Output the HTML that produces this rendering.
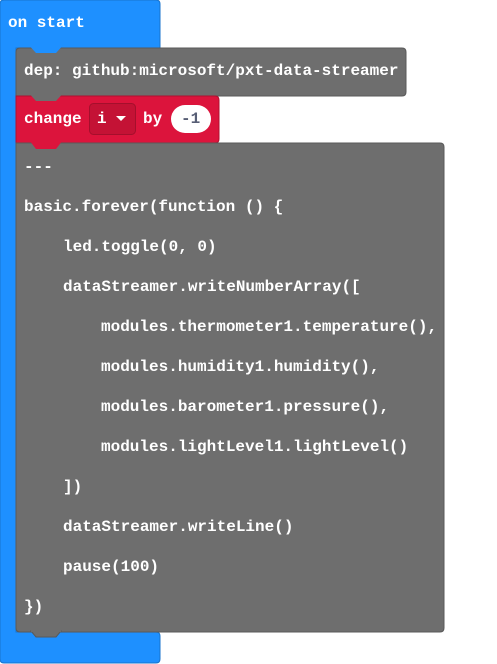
<!DOCTYPE html>
<html><head><meta charset="utf-8"><style>
html,body{margin:0;padding:0;background:#fff;width:497px;height:664px;overflow:hidden}
text{font-family:"Liberation Mono",monospace;font-weight:bold;font-size:16px;fill:#fff}
</style></head><body>
<svg width="497" height="664" xmlns="http://www.w3.org/2000/svg">
<path d="M4,0 H156 Q160,0 160,4 V48 H16 V632 H156 Q160,632 160,636 V659 Q160,663 156,663 H4 Q0,663 0,659 V4 Q0,0 4,0 Z" fill="#1e90ff" stroke="#1873cc" stroke-width="1"/>
<path d="M20,48 H402 Q406,48 406,52 V92 Q406,96 402,96 H16 V52 Q16,48 20,48 Z" fill="#6e6e6e" stroke="#595959" stroke-width="1"/>
<polygon points="31,47.5 36,53 56,53 61,47.5" fill="#1e90ff"/>
<path d="M16,96 H215 Q219,96 219,100 V139 Q219,143 215,143 H16 Z" fill="#dc143c" stroke="#b0102f" stroke-width="1"/>
<polygon points="31,95.5 36,101 56,101 61,95.5" fill="#6e6e6e"/>
<rect x="89.5" y="103.5" width="46" height="31" rx="4" fill="#c41235" stroke="#a50f2c"/>
<polygon points="116,116 126,116 121,121" fill="#fff"/>
<rect x="171" y="105" width="40" height="28" rx="14" fill="#fff"/>
<text x="24" y="123">change</text>
<text x="97" y="123">i</text>
<text x="143" y="123">by</text>
<text x="181" y="123" style="fill:#575e75">-1</text>
<path d="M16,143 H440 Q444,143 444,147 V628 Q444,632 440,632 H20 Q16,632 16,628 Z" fill="#6e6e6e" stroke="#595959" stroke-width="1"/>
<polygon points="31,142.5 36,149 56,149 61,142.5" fill="#dc143c"/>
<polygon points="31,631 36,637 56,637 61,631" fill="#6e6e6e" stroke="#595959" stroke-width="1"/>
<rect x="31" y="630" width="30" height="2" fill="#6e6e6e"/>
<text x="8" y="27">on start</text>
<text x="24" y="75">dep: github:microsoft/pxt-data-streamer</text>
<text x="24" y="171">---</text>
<text x="24" y="211">basic.forever(function () {</text>
<text x="63" y="251">led.toggle(0, 0)</text>
<text x="63" y="291">dataStreamer.writeNumberArray([</text>
<text x="101" y="331">modules.thermometer1.temperature(),</text>
<text x="101" y="371">modules.humidity1.humidity(),</text>
<text x="101" y="411">modules.barometer1.pressure(),</text>
<text x="101" y="451">modules.lightLevel1.lightLevel()</text>
<text x="63" y="491">])</text>
<text x="63" y="531">dataStreamer.writeLine()</text>
<text x="63" y="571">pause(100)</text>
<text x="24" y="611">})</text>
</svg>
</body></html>
